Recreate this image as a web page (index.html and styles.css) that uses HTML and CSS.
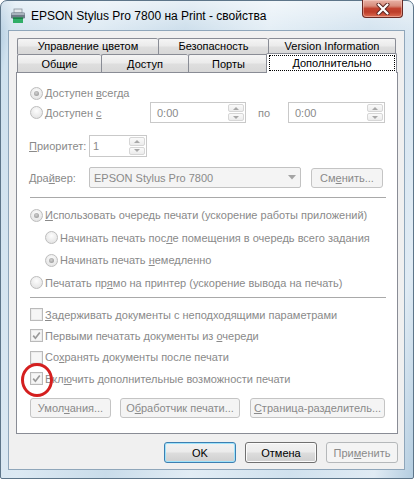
FILE: index.html
```html
<!DOCTYPE html>
<html lang="ru">
<head>
  <meta charset="UTF-8">
  <title>EPSON Stylus Pro 7800 на Print - свойства</title>
  <link rel="stylesheet" href="styles.css">
</head>
<body>
  <div class="window">
    <div class="titlebar">
      <svg class="app-icon" viewBox="0 0 16 16">
        <rect x="4" y="1" width="8" height="4" fill="#e4e8ec" stroke="#8a949e" stroke-width="0.8"/>
        <rect x="1" y="4.5" width="14" height="6" rx="1.2" fill="#6f7c88"/>
        <rect x="1.5" y="5" width="13" height="2" fill="#a7b2bc"/>
        <rect x="3" y="9.5" width="10" height="5.5" fill="#2fae67"/>
        <rect x="3" y="9.5" width="10" height="1.5" fill="#1d7f47"/>
      </svg>
      <span class="title">EPSON Stylus Pro 7800 на Print - свойства</span>
      <div class="close-btn">
        <svg width="14" height="12" viewBox="0 0 14 12">
          <path d="M2.5 1.5 L11.5 10.5 M11.5 1.5 L2.5 10.5" stroke="#5a2420" stroke-width="4" stroke-linecap="round"/>
          <path d="M2.5 1.5 L11.5 10.5 M11.5 1.5 L2.5 10.5" stroke="#fff" stroke-width="2.2" stroke-linecap="round"/>
        </svg>
      </div>
    </div>

    <div class="client">
      <div class="tab-row back">
        <div class="tab tab-color">Управление цветом</div>
        <div class="tab tab-security">Безопасность</div>
        <div class="tab tab-version">Version Information</div>
      </div>
      <div class="tab-row front">
        <div class="tab tab-general">Общие</div>
        <div class="tab tab-access">Доступ</div>
        <div class="tab tab-ports">Порты</div>
        <div class="tab tab-advanced"><span class="focus">Дополнительно</span></div>
      </div>

      <div class="page">
        <div class="row r-avail">
          <span class="radio checked"></span><span class="lbl">Доступен <u>в</u>сегда</span>
        </div>
        <div class="row r-from">
          <div class="from-label"><span class="radio"></span><span class="lbl">Доступен <u>с</u></span></div>
          <div class="spin time">
            <span class="spin-val">0:00</span>
            <span class="spin-btns"><i class="up"></i><i class="down"></i></span>
          </div>
          <span class="to-label">по</span>
          <div class="spin time time-to">
            <span class="spin-val">0:00</span>
            <span class="spin-btns"><i class="up"></i><i class="down"></i></span>
          </div>
        </div>
        <div class="row r-priority">
          <span class="field-label"><u>П</u>риоритет:</span>
          <div class="spin prio">
            <span class="spin-val">1</span>
            <span class="spin-btns"><i class="up"></i><i class="down"></i></span>
          </div>
        </div>
        <div class="row r-driver">
          <span class="field-label">Дра<u>й</u>вер:</span>
          <div class="combo">
            <span>EPSON Stylus Pro 7800</span>
            <svg class="combo-arrow" width="8" height="5" viewBox="0 0 8 5"><path d="M0 0 H8 L4 4.5 Z" fill="#a4a4a4"/></svg>
          </div>
          <button class="btn btn-change">См<u>е</u>нить...</button>
        </div>

        <div class="sep sep-top"></div>

        <div class="radio-group">
          <div class="row opt"><span class="radio checked"></span><span class="lbl"><u>И</u>спользовать очередь печати (ускорение работы приложений)</span></div>
          <div class="row opt sub"><span class="radio"></span><span class="lbl">Начинать печать пос<u>л</u>е помещения в очередь всего задания</span></div>
          <div class="row opt sub"><span class="radio checked"></span><span class="lbl">Начинать печать <u>н</u>емедленно</span></div>
          <div class="row opt"><span class="radio"></span><span class="lbl">Печатать пр<u>я</u>мо на принтер (ускорение вывода на печать)</span></div>
        </div>

        <div class="sep sep-bottom"></div>

        <div class="check-group">
          <div class="row opt-check"><span class="checkbox"></span><span class="lbl"><u>З</u>адерживать документы с неподходящими параметрами</span></div>
          <div class="row opt-check"><span class="checkbox checked"><svg width="9" height="9" viewBox="0 0 9 9"><path d="M1.2 4.6 L3.4 7.2 L7.8 1.4" fill="none" stroke="#9a9a9a" stroke-width="1.7"/></svg></span><span class="lbl">Первыми печатать документы из <u>о</u>череди</span></div>
          <div class="row opt-check"><span class="checkbox"></span><span class="lbl">Со<u>х</u>ранять документы после печати</span></div>
          <div class="row opt-check">
            <span class="checkbox checked marked"><svg width="9" height="9" viewBox="0 0 9 9"><path d="M1.2 4.6 L3.4 7.2 L7.8 1.4" fill="none" stroke="#9a9a9a" stroke-width="1.7"/></svg><span class="annot"></span></span>
            <span class="lbl">Вкл<u>ю</u>чить дополнительные возможности печати</span>
          </div>
        </div>

        <div class="row page-buttons">
          <button class="btn btn-defaults">Умол<u>ч</u>ания...</button>
          <button class="btn btn-processor">О<u>б</u>работчик печати...</button>
          <button class="btn btn-separator"><u>С</u>траница-разделитель...</button>
        </div>
      </div>

      <div class="dialog-buttons">
        <button class="dlg-btn default">OK</button>
        <button class="dlg-btn">Отмена</button>
        <button class="dlg-btn disabled">При<u>м</u>енить</button>
      </div>
    </div>
  </div>
</body>
</html>
```

FILE: styles.css
```css
* { box-sizing: border-box; }
body { margin: 0; font-family: "Liberation Sans", Arial, sans-serif; font-size: 11px; color: #000; background: #fff; }
u { text-decoration: underline; text-underline-offset: 1px; }
button { font: inherit; padding: 0; cursor: default; }

/* window frame */
.window {
  width: 414px; height: 479px;
  display: flex; flex-direction: column;
  padding: 0 8px 8px 7px;
  border: 1px solid #5d7589;
  border-radius: 7px 7px 2px 2px;
  background:
    linear-gradient(180deg, rgba(255,255,255,0.55), rgba(255,255,255,0.1) 28px, rgba(255,255,255,0) 40px),
    linear-gradient(100deg, #a9c6dc 0%, #cfe1ee 3%, #dce9f3 20%, #c9dcea 38%, #e2edf5 55%, #d0e1ee 75%, #e0ebf4 92%, #b4cde0 100%);
}
.titlebar { height: 29px; display: flex; align-items: center; flex-shrink: 0; }
.app-icon { width: 16px; height: 16px; margin-left: 2px; margin-right: 5px; }
.title { font-size: 12px; color: #000; }
.close-btn {
  margin-left: auto; margin-right: 2px; margin-top: -1px; align-self: flex-start;
  width: 41px; height: 18px;
  display: flex; align-items: center; justify-content: center;
  border: 1px solid #6a2a24; border-top: none; border-radius: 0 0 4px 4px;
  background: linear-gradient(#e8b2a6 0%, #d88c7c 35%, #c24330 50%, #bd3d29 70%, #dc6c52 100%);
  box-shadow: inset 0 0 0 1px rgba(255,220,210,0.45);
}

.client {
  flex: 1;
  display: flex; flex-direction: column;
  background: #f0f0f0;
  border: 1px solid #8fa6ba;
  padding: 7px 6px 0 7px;
}

/* tabs */
.tab-row { display: flex; padding-left: 1px; }
.tab-row.back { height: 16px; }
.tab-row.front { height: 18px; }
.tab {
  display: flex; align-items: center; justify-content: center;
  border: 1px solid #898c95; border-bottom: none; border-right: none;
  border-radius: 2px 2px 0 0;
  background: linear-gradient(#f5f5f5, #ebebeb 45%, #dedede 55%, #d8d8d8);
  white-space: nowrap;
}
.tab:last-child { border-right: 1px solid #898c95; }
.back .tab { padding-bottom: 1px; }
.tab-color { width: 141px; }
.tab-security { width: 110px; }
.tab-version { width: 128px; }
.tab-general { width: 84px; }
.tab-access { width: 87px; }
.tab-ports { width: 80px; }
.tab-advanced {
  position: relative; z-index: 1;
  width: 131px; height: 20px;
  margin: -1px -2px -1px -2px;
  background: #fff;
  border-right: 1px solid #898c95;
  padding: 1px 1px 2px 2px;
}
.tab-advanced .focus {
  flex: 1; align-self: stretch;
  display: flex; align-items: center; justify-content: center;
  outline: 1px dotted #000; outline-offset: -1px;
}

/* page */
.page {
  height: 362px;
  background: #fff;
  border: 1px solid #898c95;
  padding: 11px 11px 0 13px;
  color: #8a8a8a;
}
.row { display: flex; align-items: center; white-space: nowrap; }
.r-avail { height: 18px; }
.r-from { height: 21px; }
.r-priority { height: 22px; margin-top: 12px; }
.r-driver { height: 21px; margin-top: 10px; }
.from-label { width: 120px; display: flex; align-items: center; }
.to-label { width: 42px; padding-left: 12px; }
.field-label { width: 60px; margin-left: -1px; }

.radio {
  width: 13px; height: 13px; flex-shrink: 0;
  display: flex; align-items: center; justify-content: center;
  border-radius: 50%;
  border: 1px solid #bdbdbd;
  background: radial-gradient(circle at 50% 35%, #fdfdfd, #e4e4e4 80%);
  margin-right: 2px;
}
.radio.checked::after {
  content: ""; width: 5px; height: 5px; border-radius: 50%;
  background: radial-gradient(circle at 45% 40%, #d0d0d0, #8c8c8c);
}
.checkbox {
  position: relative;
  width: 13px; height: 13px; flex-shrink: 0;
  display: flex; align-items: center; justify-content: center;
  border: 1px solid #bababa;
  background: #f6f6f6;
  box-shadow: inset 0 0 0 1px #ececec;
  margin-right: 2px;
}
.annot {
  position: absolute; left: -10px; top: -10px;
  width: 32px; height: 34px;
  border: 3px solid #d41f1f; border-radius: 50%;
}

.spin {
  display: flex; height: 21px;
  border: 1px solid #c9c9c9;
  background: #fff;
}
.spin.time { width: 96px; }
.spin.time-to { width: 97px; }
.spin.prio { width: 58px; height: 22px; }
.spin-val { flex: 1; display: flex; align-items: center; padding-left: 6px; }
.prio .spin-val { padding-left: 3px; }
.spin-btns { width: 17px; display: flex; flex-direction: column; gap: 1px; padding: 1px 1px 1px 0; }
.spin-btns i {
  flex: 1; display: flex; align-items: center; justify-content: center;
  border: 1px solid #d6d6d6; border-radius: 2px;
  background: linear-gradient(#fafafa, #ececec);
}
.spin-btns i::after { content: ""; border-left: 3px solid transparent; border-right: 3px solid transparent; }
.spin-btns .up::after { border-bottom: 3px solid #a8a8a8; }
.spin-btns .down::after { border-top: 3px solid #a8a8a8; }

.combo {
  width: 212px; height: 21px;
  display: flex; align-items: center;
  padding-left: 4px;
  border: 1px solid #c2c2c2; border-radius: 2px;
  background: #f4f4f4;
}
.combo-arrow { margin-left: auto; margin-right: 4px; }

.btn {
  height: 20px;
  border: 1px solid #c4c4c4; border-radius: 3px;
  background: #f4f4f4;
  color: #8a8a8a;
}
.btn-change { width: 72px; margin-left: 10px; }

.sep { height: 1px; background: #a9a9a9; }
.sep-top { margin-top: 9px; }
.sep-bottom { margin-top: 3px; }

.radio-group { margin-top: 6px; }
.opt { height: 22.5px; }
.opt.sub { padding-left: 15px; }
.check-group { margin-top: 6px; }
.opt-check { height: 21.3px; }

.page-buttons { margin-top: 9px; }
.btn-defaults { width: 81px; }
.btn-processor { width: 120px; margin-left: 9px; }
.btn-separator { width: 135px; margin-left: 10px; }

/* dialog buttons */
.dialog-buttons { display: flex; justify-content: flex-end; gap: 9px; margin-top: 8px; }
.dlg-btn {
  width: 72px; height: 21px;
  border: 1px solid #707070; border-radius: 3px;
  background: linear-gradient(#f2f2f2, #ebebeb 48%, #dddddd 52%, #cfcfcf);
  box-shadow: inset 0 0 0 1px #fbfbfb;
  color: #000;
}
.dlg-btn.default { border-color: #3c7fb1; box-shadow: inset 0 0 0 1px #9fe3fb; }
.dlg-btn.disabled { border-color: #b5b8ba; background: #f4f4f4; box-shadow: none; color: #8a8a8a; }
```
